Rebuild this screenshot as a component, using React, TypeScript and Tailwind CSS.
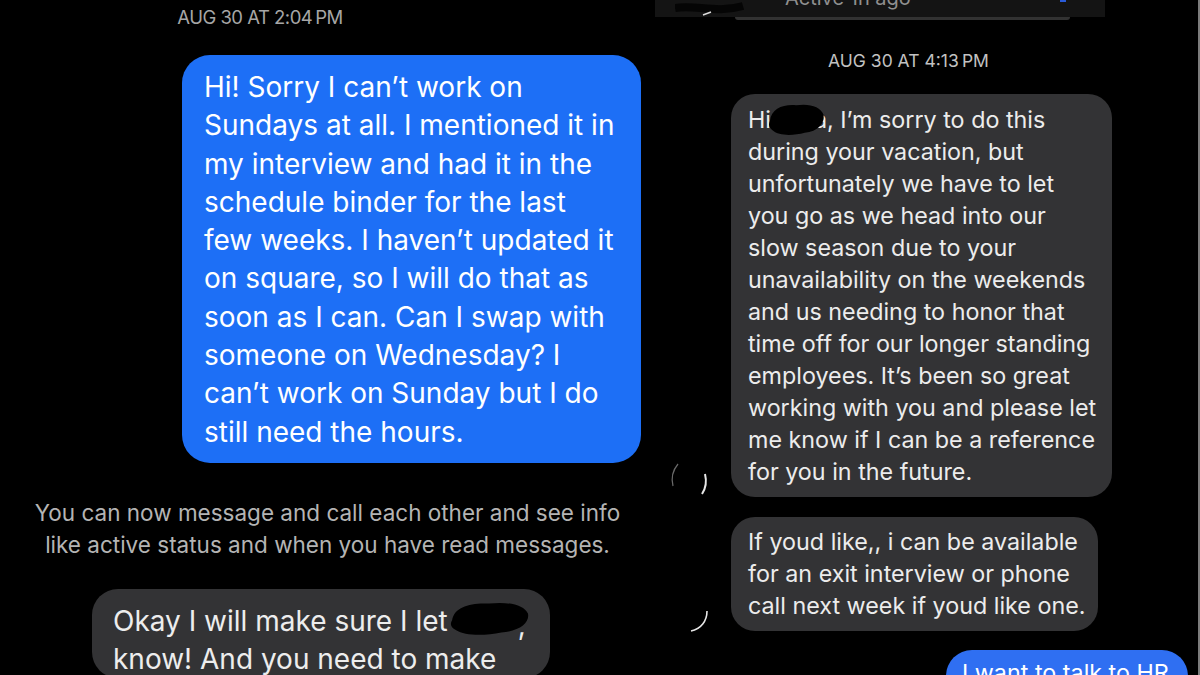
import React from "react";

const Blob = ({ className = "" }: { className?: string }) => (
  <svg className={className} viewBox="0 0 80 36" preserveAspectRatio="none">
    <path
      d="M4 20 C6 8 22 4 40 5 C58 3 74 6 78 14 C80 22 70 30 52 31 C36 34 16 34 8 29 C2 26 2 23 4 20 Z"
      fill="#000"
    />
  </svg>
);

export default function App() {
  const blueLines = [
    "Hi! Sorry I can\u2019t work on",
    "Sundays at all. I mentioned it in",
    "my interview and had it in the",
    "schedule binder for the last",
    "few weeks. I haven\u2019t updated it",
    "on square, so I will do that as",
    "soon as I can. Can I swap with",
    "someone on Wednesday? I",
    "can\u2019t work on Sunday but I do",
    "still need the hours.",
  ];
  const rightLines = [
    "during your vacation, but",
    "unfortunately we have to let",
    "you go as we head into our",
    "slow season due to your",
    "unavailability on the weekends",
    "and us needing to honor that",
    "time off for our longer standing",
    "employees. It\u2019s been so great",
    "working with you and please let",
    "me know if I can be a reference",
    "for you in the future.",
  ];
  return (
    <div className="w-[1200px] h-[675px] bg-black overflow-hidden flex font-['Inter','Noto_Sans',sans-serif]">
      {/* LEFT */}
      <div className="w-[655px] shrink-0 flex flex-col">
        <div className="pt-[5px] pr-[135px] text-center text-[18.5px] tracking-[-0.5px] leading-[24px] text-[#a6a6a6]">
          AUG 30 AT 2:04{"\u2009"}PM
        </div>
        <div className="self-end mr-[14px] mt-[26px] w-[459px] rounded-[28px] bg-[#1d6ff6] pl-[22px] pt-[13px] pb-[12px] text-[28px] leading-[38.3px] text-white">
          {blueLines.map((l, i) => (
            <div key={i} className="whitespace-nowrap">{l}</div>
          ))}
        </div>
        <div className="mt-[34px] text-center text-[22.5px] leading-[32px] text-[#b4b4b4]">
          <div className="whitespace-nowrap">You can now message and call each other and see info</div>
          <div className="whitespace-nowrap">like active status and when you have read messages.</div>
        </div>
        <div className="ml-[92px] mt-[28px] w-[458px] h-[140px] rounded-[26px] bg-[#333335] pl-[21px] pt-[13px] text-[28px] leading-[38px] text-[#ededed]">
          <div className="whitespace-nowrap flex items-center">
            <span>Okay I will make sure I let</span>
            <span className="relative inline-block w-[80px] h-[38px]">
              <span className="absolute left-[70px] top-[4px] text-[#ededed]">,</span>
              <Blob className="absolute left-[0px] top-[-4px] w-[82px] h-[40px]" />
            </span>
          </div>
          <div className="whitespace-nowrap">know! And you need to make</div>
        </div>
      </div>

      {/* RIGHT */}
      <div className="w-[545px] shrink-0 flex flex-col border-r-2 border-[#7c7c7c]">
        <div className="h-[20px] flex flex-col">
          <div className="w-[450px] h-[17px] bg-[#141414] overflow-hidden relative">
            <div className="absolute left-[130px] top-[-14px] text-[20px] leading-[24px] text-[#8f8f8f] whitespace-nowrap">
              Active 1h ago
            </div>
            <svg className="absolute left-[20px] top-[2px]" width="70" height="15" viewBox="0 0 70 15">
              <path d="M0 6 C20 2 40 12 68 4" stroke="#050505" strokeWidth="8" fill="none" />
              <path d="M28 13 L36 10" stroke="#dcdcdc" strokeWidth="1.5" />
            </svg>
            <div className="absolute left-[405px] top-0 w-[6px] h-[2px] bg-[#2a5bd8]" />
          </div>
          <div className="ml-[80px] w-[335px] h-[3px] rounded-b-[3px] bg-[#323232]" />
        </div>
        <div className="mt-[30px] pr-[36px] text-center text-[17.5px] leading-[22px] text-[#c2c2c2]">
          AUG 30 AT 4:13{"\u2009"}PM
        </div>
        <div className="mt-[22px] flex">
          <div className="w-[76px] shrink-0 relative">
            <svg className="absolute left-[10px] top-[362px]" width="50" height="50" viewBox="0 0 50 50">
              <path d="M8 30 C6 22 8 14 13 8" stroke="#6a6a6a" strokeWidth="1.2" fill="none" />
              <path d="M40 18 C42 26 41 32 37 38" stroke="#e6e6e6" strokeWidth="2" fill="none" />
            </svg>
          </div>
          <div className="w-[381px] rounded-[24px] bg-[#333335] pl-[17px] pt-[10px] pb-[9px] text-[23.3px] leading-[32px] text-[#ececec]">
            <div className="whitespace-nowrap flex items-center">
              <span>Hi</span>
              <span className="relative inline-block w-[56px] h-[32px]">
                <span className="absolute right-[0px] top-0 text-[#ececec]">a</span>
                <Blob className="absolute left-[-4px] top-[-4px] w-[58px] h-[38px]" />
              </span>
              <span>{", I\u2019m sorry to do this"}</span>
            </div>
            {rightLines.map((l, i) => (
              <div key={i} className="whitespace-nowrap">{l}</div>
            ))}
          </div>
        </div>
        <div className="mt-[20px] flex">
          <div className="w-[76px] shrink-0 relative">
            <svg className="absolute left-[28px] top-[90px]" width="30" height="30" viewBox="0 0 30 30">
              <path d="M24 4 C24 14 18 22 8 24" stroke="#e6e6e6" strokeWidth="1.6" fill="none" />
            </svg>
          </div>
          <div className="w-[367px] rounded-[24px] bg-[#333335] pl-[17px] pt-[9px] pb-[9px] text-[23.3px] leading-[32px] text-[#ececec]">
            <div className="whitespace-nowrap">If youd like,, i can be available</div>
            <div className="whitespace-nowrap">for an exit interview or phone</div>
            <div className="whitespace-nowrap">call next week if youd like one.</div>
          </div>
        </div>
        <div className="self-end mr-[10px] mt-[19px] w-[242px] h-[60px] shrink-0 rounded-[26px] bg-[#2f6ff2] pl-[16px] pt-[7px] text-[23.3px] leading-[32px] text-white whitespace-nowrap">
          I want to talk to HR
        </div>
      </div>
    </div>
  );
}
